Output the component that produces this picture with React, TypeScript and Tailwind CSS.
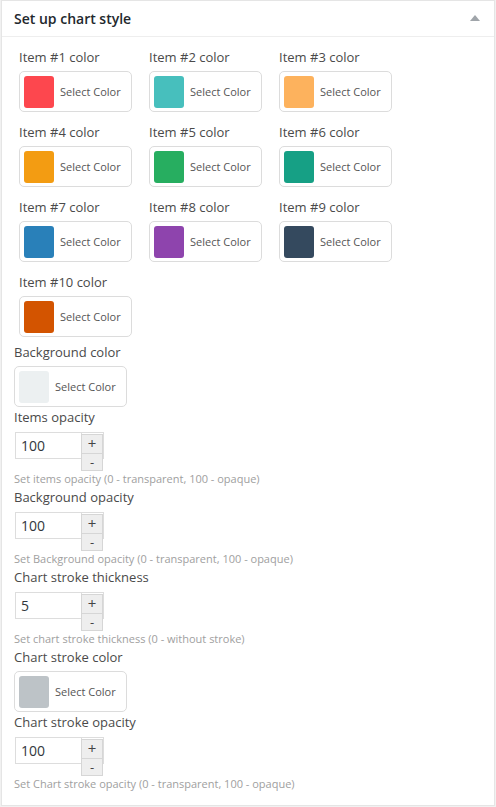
import React from "react";

const items = [
  { n: 1, c: "#fd474e" },
  { n: 2, c: "#47bfbd" },
  { n: 3, c: "#fdb25d" },
  { n: 4, c: "#f39c12" },
  { n: 5, c: "#27ae60" },
  { n: 6, c: "#16a085" },
  { n: 7, c: "#2980b9" },
  { n: 8, c: "#8e44ad" },
  { n: 9, c: "#34495e" },
  { n: 10, c: "#d35400" },
];

function ColorButton({ color }: { color: string }) {
  return (
    <div className="flex h-[41px] w-[113px] items-center gap-[6px] rounded-[5px] border border-[#dcdcdc] bg-white pl-[4px]">
      <div className="h-[32px] w-[30px] rounded-[3px]" style={{ backgroundColor: color }} />
      <span className="text-[11px] leading-none text-[#555]">Select Color</span>
    </div>
  );
}

function Label({ children }: { children: React.ReactNode }) {
  return <div className="h-[20px] text-[13px] leading-[20px] text-[#4a4a4a]">{children}</div>;
}

function NumberField({ label, value, help }: { label: string; value: string; help: string }) {
  return (
    <div>
      <Label>{label}</Label>
      <div className="mt-[5px] flex h-[39px] items-start pl-[1px]">
        <input
          readOnly
          value={value}
          className="h-[27px] w-[67px] border border-[#dddddd] bg-white px-[5px] text-[14px] text-[#32373c] outline-none"
        />
        <div className="relative -ml-[1px] h-[27px] w-[23px] border border-l-0 border-[#dddddd]">
          <div className="absolute left-0 top-[1px] flex flex-col">
            <div className="flex h-[20px] w-[22px] items-start justify-center border border-[#d6d6d6] bg-[#eeeeee] pt-[1px] text-[15px] leading-[15px] text-[#444]">
              +
            </div>
            <div className="-mt-[1px] flex h-[18px] w-[22px] items-center justify-center border border-[#d6d6d6] bg-[#eeeeee] text-[13px] leading-none text-[#444]">
              -
            </div>
          </div>
        </div>
      </div>
      <div className="h-[16px] text-[11px] leading-[16px] text-[#a0a0a0]">{help}</div>
    </div>
  );
}

export default function App() {
  return (
    <div
      className="min-h-[807px] bg-[#f1f1f1] pl-[1px] pt-0"
      style={{ fontFamily: '"Open Sans", "Noto Sans", sans-serif' }}
    >
      <div className="w-[494px] border border-[#e5e5e5] bg-white">
        <div className="flex h-[36px] items-center justify-between border-b border-[#eeeeee] pl-[12px] pr-[14px]">
          <h2 className="text-[14px] font-semibold text-[#23282d]">Set up chart style</h2>
          <svg width="10" height="6" viewBox="0 0 10 6" className="mb-[1px]">
            <polygon points="5,0 10,6 0,6" fill="#a0a5aa" />
          </svg>
        </div>
        <div className="px-[12px] pb-[13px] pt-[10px]">
          <div className="grid grid-cols-[130px_130px_130px] gap-y-[10px] pl-[5px]">
            {items.map((it) => (
              <div key={it.n}>
                <Label>Item #{it.n} color</Label>
                <div className="mt-[4px]">
                  <ColorButton color={it.c} />
                </div>
              </div>
            ))}
          </div>
          <div className="mt-[5px]">
            <Label>Background color</Label>
            <div className="mt-[4px]">
              <ColorButton color="#ecf0f1" />
            </div>
          </div>
          <NumberField
            label="Items opacity"
            value="100"
            help="Set items opacity (0 - transparent, 100 - opaque)"
          />
          <NumberField
            label="Background opacity"
            value="100"
            help="Set Background opacity (0 - transparent, 100 - opaque)"
          />
          <NumberField
            label="Chart stroke thickness"
            value="5"
            help="Set chart stroke thickness (0 - without stroke)"
          />
          <div>
            <Label>Chart stroke color</Label>
            <div className="mt-[4px]">
              <ColorButton color="#bdc3c7" />
            </div>
          </div>
          <NumberField
            label="Chart stroke opacity"
            value="100"
            help="Set Chart stroke opacity (0 - transparent, 100 - opaque)"
          />
        </div>
      </div>
    </div>
  );
}
